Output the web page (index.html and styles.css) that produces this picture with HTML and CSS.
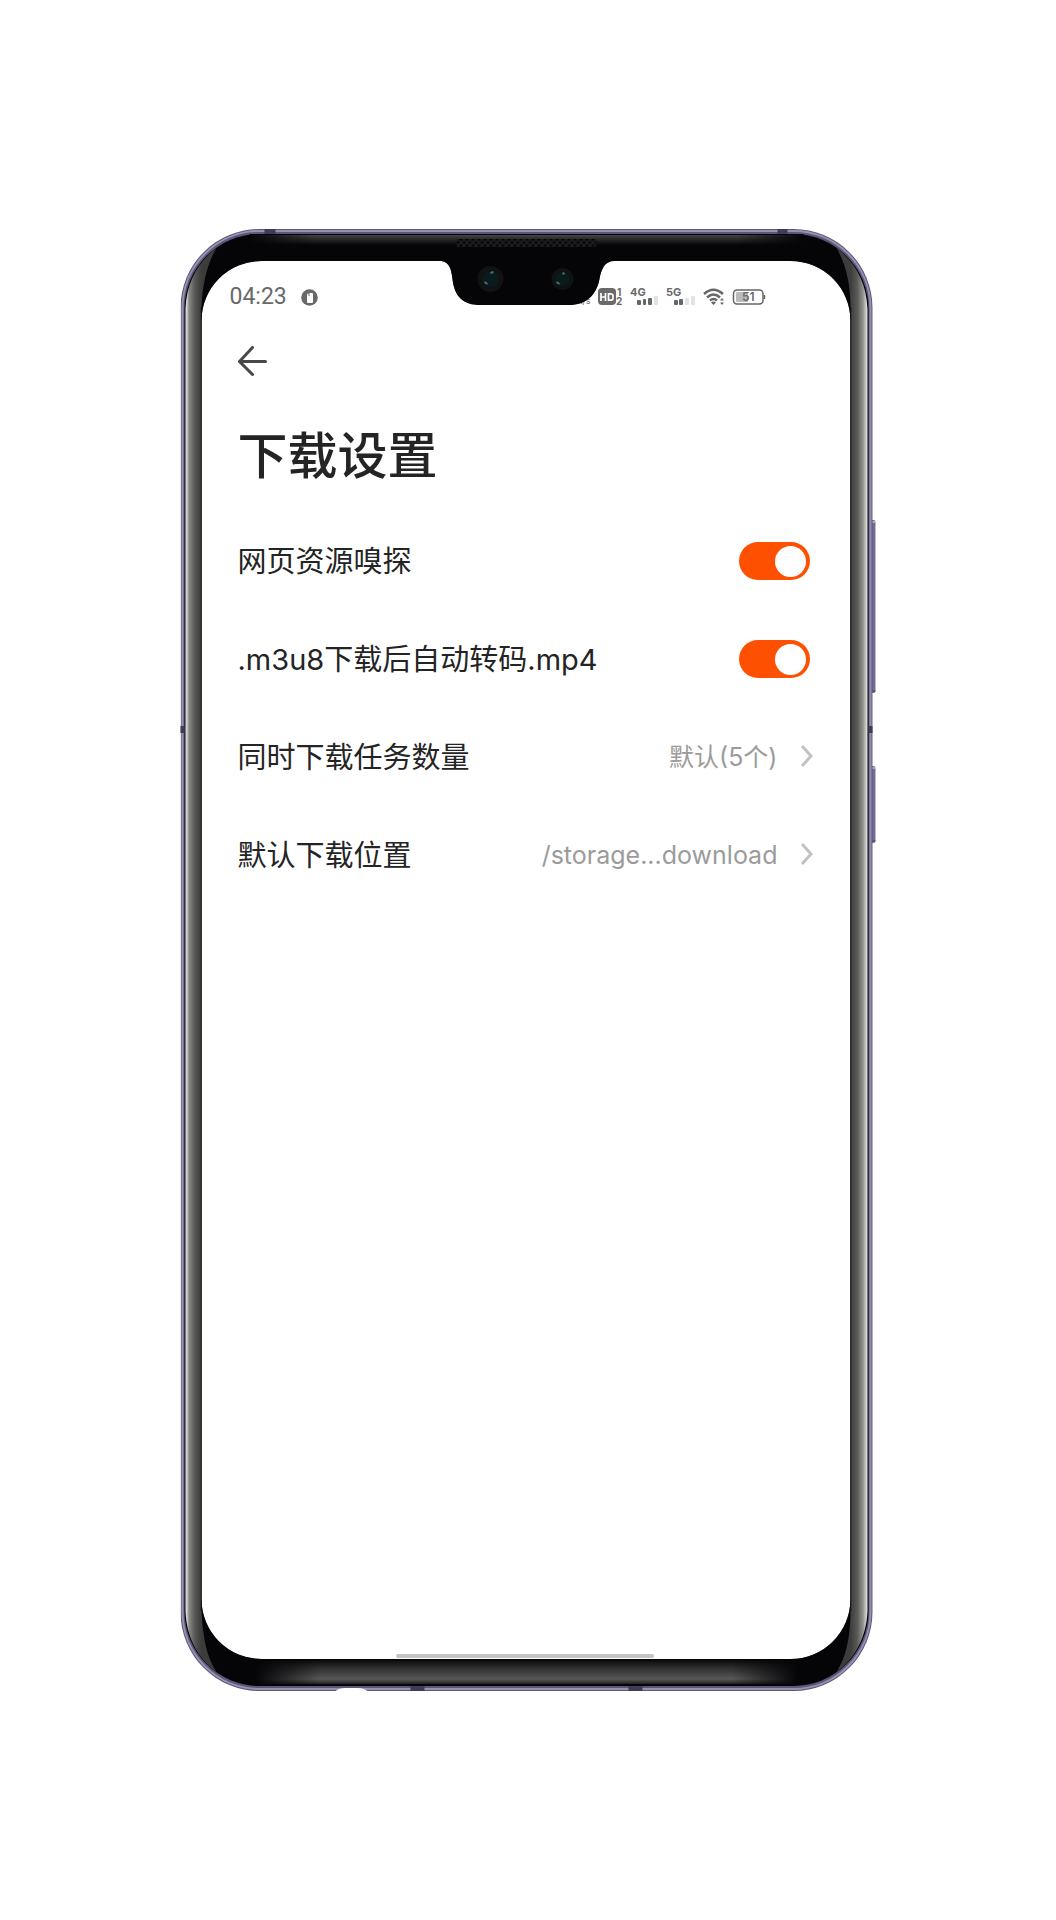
FILE: index.html
```html
<!DOCTYPE html>
<html lang="zh-Hans">
<head>
    <meta charset="UTF-8">
    <meta name="viewport" content="width=device-width, initial-scale=1.0">
    <title>下载设置</title>
    <link rel="stylesheet" href="styles.css">
</head>
<body>
    <div class="phone">
        <div class="screen">
            <header class="status-bar">
                <div class="status-left">
                    <span class="clock">04:23</span>
                    <svg width="17" height="17" viewBox="0 0 17 17" aria-hidden="true">
                        <circle cx="8.5" cy="8.5" r="8.3" fill="#696969"/>
                        <rect x="6" y="4" width="6" height="10" rx="1" fill="#fff"/>
                        <path d="M6 5l2-1v3" stroke="#777" fill="none"/>
                    </svg>
                </div>
                <div class="status-right">
                    <span class="speed">K/s</span>
                    <svg width="25" height="20" viewBox="0 0 25 20" aria-hidden="true">
                        <rect x="1" y="1" width="18" height="17" rx="4" fill="#6a6a6a"/>
                        <path d="M4 6v8M8.500 6v8M4 10h4.500M11.500 6.800v6.400h2q2.500 0 2.500-2v-2.400q0-2-2.500-2z" fill="none" stroke="#fff" stroke-width="1.700"/>
                        <text x="20" y="9" class="tiny">1</text>
                        <text x="19" y="18" class="tiny">2</text>
                    </svg>
                    <svg width="30" height="20" viewBox="0 0 30 20" aria-hidden="true">
                        <text x="1" y="9" class="net">4G</text>
                        <rect x="8" y="13" width="4" height="5" rx="1" fill="#666"/>
                        <rect x="14" y="12" width="3" height="6" rx="1" fill="#666"/>
                        <rect x="19" y="11" width="4" height="7" rx="1" fill="#666"/>
                        <rect x="25" y="9" width="4" height="9" rx="1" fill="#e2e2e2"/>
                    </svg>
                    <svg width="30" height="20" viewBox="0 0 30 20" aria-hidden="true">
                        <text x="0" y="9" class="net">5G</text>
                        <rect x="8" y="13" width="4" height="5" rx="1" fill="#666"/>
                        <rect x="13" y="12" width="4" height="6" rx="1" fill="#666"/>
                        <rect x="19" y="11" width="4" height="7" rx="1" fill="#e2e2e2"/>
                        <rect x="25" y="9" width="4" height="9" rx="1" fill="#e2e2e2"/>
                    </svg>
                    <svg width="22" height="20" viewBox="0 0 22 20" aria-hidden="true">
                        <path d="M1 7q9.500-8.500 19 0M4 10.500q6.500-6 13 0M7 13.500q3.500-3 7 0" fill="none" stroke="#666" stroke-width="2.400"/>
                        <path d="M8 15.500q2.500-2 5 0l-2.500 2.500z" fill="#666"/>
                        <path d="M17 13.500l2-2.500 2 2.500zM17 15.500l2 2.500 2-2.500z" fill="#666"/>
                    </svg>
                    <svg width="34" height="20" viewBox="0 0 34 20" aria-hidden="true">
                        <rect x="1.500" y="3" width="29.500" height="14" rx="3.500" fill="#fff" stroke="#666" stroke-width="1.500"/>
                        <rect x="4" y="5" width="12" height="10" rx="1" fill="#bbb"/>
                        <path d="M32.500 8v4" stroke="#666" stroke-width="1.500"/>
                        <text x="10" y="14" class="battery">51</text>
                    </svg>
                </div>
            </header>

            <nav class="nav">
                <button type="button" class="back" aria-label="返回">
                    <svg width="30" height="30" viewBox="0 0 30 30" aria-hidden="true">
                        <path d="M15.500 1.500L2.500 15.500l13 13M2.500 15.500h26" fill="none" stroke="#484848" stroke-width="3" stroke-linecap="round" stroke-linejoin="round"/>
                    </svg>
                </button>
            </nav>

            <main class="content">
                <h1>下载设置</h1>
                <label class="row" for="sniff">
                    <span class="name">网页资源嗅探</span>
                    <input type="checkbox" id="sniff" class="switch" checked>
                </label>
                <label class="row" for="convert">
                    <span class="name">.m3u8下载后自动转码.mp4</span>
                    <input type="checkbox" id="convert" class="switch" checked>
                </label>
                <button type="button" class="row">
                    <span class="name">同时下载任务数量</span>
                    <span class="value">默认(5个)</span>
                    <svg class="chevron" width="14" height="24" viewBox="0 0 14 24" aria-hidden="true"><path d="M3 1l9 10-9 10"/></svg>
                </button>
                <button type="button" class="row">
                    <span class="name">默认下载位置</span>
                    <span class="value">/storage...download</span>
                    <svg class="chevron" width="14" height="24" viewBox="0 0 14 24" aria-hidden="true"><path d="M3 1l9 10-9 10"/></svg>
                </button>
            </main>
            <div class="home-bar"></div>
        </div>

        <!-- phone shell, lies over the screen so the notch covers the status bar -->
        <svg class="shell" viewBox="0 0 696 1462" aria-hidden="true">
            <defs>
                <linearGradient id="left" gradientUnits="userSpaceOnUse" x1="5" x2="21" y1="0" y2="0">
                    <stop offset="0" stop-color="#e4e4df"/>
                    <stop offset="0.120" stop-color="#c0c0bc"/>
                    <stop offset="0.220" stop-color="#888"/>
                    <stop offset="0.600" stop-color="#565754"/>
                    <stop offset="1" stop-color="#3c3d3a"/>
                </linearGradient>
                <linearGradient id="right" gradientUnits="userSpaceOnUse" x1="670" x2="687" y1="0" y2="0">
                    <stop offset="0" stop-color="#3c3d3c"/>
                    <stop offset="0.400" stop-color="#5a5a58"/>
                    <stop offset="0.750" stop-color="#959592"/>
                    <stop offset="0.900" stop-color="#c8c8c4"/>
                    <stop offset="1" stop-color="#e8e8e4"/>
                </linearGradient>
                <linearGradient id="top" x2="0" y2="1">
                    <stop offset="0" stop-color="#444"/>
                    <stop offset="1" stop-color="#050505"/>
                </linearGradient>
                <linearGradient id="bottom" x2="0" y2="1">
                    <stop offset="0" stop-color="#0a0a0a"/>
                    <stop offset="0.350" stop-color="#303030"/>
                    <stop offset="0.800" stop-color="#585858"/>
                    <stop offset="1" stop-color="#222"/>
                </linearGradient>
                <linearGradient id="fade">
                    <stop offset="0" stop-color="#050508"/>
                    <stop offset="0.120" stop-color="#050508" stop-opacity="0"/>
                    <stop offset="0.880" stop-color="#050508" stop-opacity="0"/>
                    <stop offset="1" stop-color="#050508"/>
                </linearGradient>
                <pattern id="mesh" width="6" height="6" patternUnits="userSpaceOnUse">
                    <circle cx="1.500" cy="1.500" r="1.200" fill="#000"/>
                    <circle cx="4.500" cy="4.500" r="1.200" fill="#000"/>
                </pattern>
                <clipPath id="hole">
                    <path clip-rule="evenodd" d="M0 0H696V1462H0ZM81 32H261C269 33 271 41 272 50C274 68 283 76 300 76H388C406 76 416 66 419 50C421 40 424 32 434 32H610A60 60 0 0 1 670 92V1370A60 60 0 0 1 610 1430H81A60 60 0 0 1 21 1370V92A60 60 0 0 1 81 32Z"/>
                </clipPath>
            </defs>
            <!-- side keys -->
            <rect x="690" y="291" width="5" height="173" rx="2" fill="#746b98"/>
            <rect x="690" y="537" width="5" height="77" rx="2" fill="#746b98"/>
            <path d="M691 293h4M691 539h4" stroke="#ddd"/>
            <path d="M691 462h4M691 612h4" stroke="#444"/>
            <g clip-path="url(#hole)">
                <rect x="0" y="0" width="692" height="1462" rx="79" fill="#5c5779"/>
                <rect x="2" y="2" width="688" height="1458" rx="77" fill="none" stroke="#9691b0" stroke-width="2"/>
                <rect x="4" y="5" width="684" height="1452" rx="75" fill="#050508"/>
                <rect x="70" y="6" width="552" height="10" fill="url(#top)"/>
                <rect x="69" y="5" width="554" height="12" fill="url(#fade)"/>
                <rect x="76" y="1431" width="540" height="24" fill="url(#bottom)"/>
                <rect x="75" y="1430" width="542" height="26" fill="url(#fade)"/>
                <path d="M5 80C6 54 17 33 36 19C27 34 22 54 21 78V1381C22 1407 26 1428 36 1443C17 1429 6 1408 5 1382Z" fill="url(#left)"/>
                <path d="M687 80C686 54 675 33 656 19C665 34 670 54 670 78V1381C670 1407 666 1428 656 1443C675 1429 686 1408 687 1382Z" fill="url(#right)"/>
                <path d="M21 78V1382M670 78V1382" stroke="#111" stroke-width="1.500"/>
                <rect x="276" y="10" width="140" height="8" rx="2" fill="#1c1c1c"/>
                <rect x="276" y="10" width="140" height="8" rx="2" fill="url(#mesh)"/>
            </g>
            <!-- cameras -->
            <circle cx="310" cy="50" r="13" fill="#111313"/>
            <circle cx="310" cy="50" r="8" fill="#091b1d"/>
            <path d="M310 44l3-1M304 53l3 2" stroke="#467174" stroke-width="2"/>
            <circle cx="382" cy="50" r="11" fill="#101212"/>
            <circle cx="382" cy="50" r="7" fill="#091b1d"/>
            <path d="M382 45l2-1M376 53l3 2" stroke="#467174" stroke-width="2"/>
            <!-- antenna lines -->
            <path d="M84 0h11v5h-11zM597 0h10v5h-10zM0 497h4v7h-4zM688 497h4v7h-4zM230 1457h14v5h-14zM448 1457h14v5h-14z" fill="#403c57"/>
            <path d="M155 1462q4-3 10-3h12q6 0 10 3z" fill="#fff"/>
        </svg>
    </div>
</body>
</html>
```
FILE: styles.css
```css
* {
    box-sizing: border-box;
}
body {
    margin: 0;
    padding: 229px 0;
    background: #fff;
    color: #242424;
    font-family: Inter, "Noto Sans CJK SC", sans-serif;
}
.phone {
    position: relative;
    display: flex;
    width: 66%;
    min-height: 1462px;
    margin: 0 auto;
    padding: 32px 26px 32px 21px;
}
.shell {
    position: absolute;
    inset: 0;
    width: 100%;
    height: 100%;
    pointer-events: none;
}
.screen {
    flex: 1;
    display: flex;
    flex-direction: column;
    min-width: 0;
}
.status-bar {
    display: flex;
    justify-content: space-between;
    align-items: center;
    height: 72px;
    padding: 0 84px 0 29px;
    color: #696969;
}
.status-left {
    display: flex;
    align-items: center;
    gap: 14px;
}
.clock {
    font-family: Roboto, sans-serif;
    font-size: 23px;
    line-height: 24px;
}
.status-right {
    display: flex;
    align-items: flex-end;
    gap: 7px;
}
.status-right svg {
    overflow: visible;
}
.speed {
    font-size: 9px;
    line-height: 12px;
}
.tiny,
.net,
.battery {
    font-family: Inter, sans-serif;
    font-weight: 700;
    fill: #696969;
}
.tiny {
    font-size: 10px;
}
.net {
    font-size: 11px;
}
.battery {
    font-size: 12px;
    font-weight: 600;
}
.nav {
    display: flex;
    align-items: center;
    height: 56px;
    padding: 0 36px;
}
.back {
    display: flex;
    padding: 0;
    border: none;
    background: none;
    cursor: pointer;
}
.content {
    padding: 0 37px;
}
h1 {
    margin: 0;
    padding: 37px 0 26px;
    font-size: 50px;
    line-height: 60px;
    font-weight: 500;
}
.row {
    display: flex;
    align-items: center;
    width: 100%;
    height: 98px;
    padding: 0;
    border: none;
    background: none;
    color: inherit;
    font-family: inherit;
    font-size: 29px;
    line-height: 40px;
    text-align: left;
    cursor: pointer;
}
.name {
    padding-top: 2px;
}
.value {
    margin-left: auto;
    color: #9b9b9b;
    font-size: 25px;
}
.chevron {
    margin-left: 22px;
    fill: none;
    stroke: #c2c2c2;
    stroke-width: 3;
}
.switch {
    appearance: none;
    display: flex;
    align-items: center;
    width: 71px;
    height: 38px;
    margin: 0 3px 0 auto;
    padding: 0 4px;
    border-radius: 19px;
    background: #ccc;
    cursor: pointer;
}
.switch::before {
    content: "";
    width: 31px;
    height: 31px;
    border-radius: 50%;
    background: #fff;
}
.switch:checked {
    justify-content: flex-end;
    background: #fe5000;
}
.home-bar {
    width: 258px;
    height: 4px;
    margin: auto auto 1px;
    border-radius: 2px;
    background: #c4c4c4;
}
```
